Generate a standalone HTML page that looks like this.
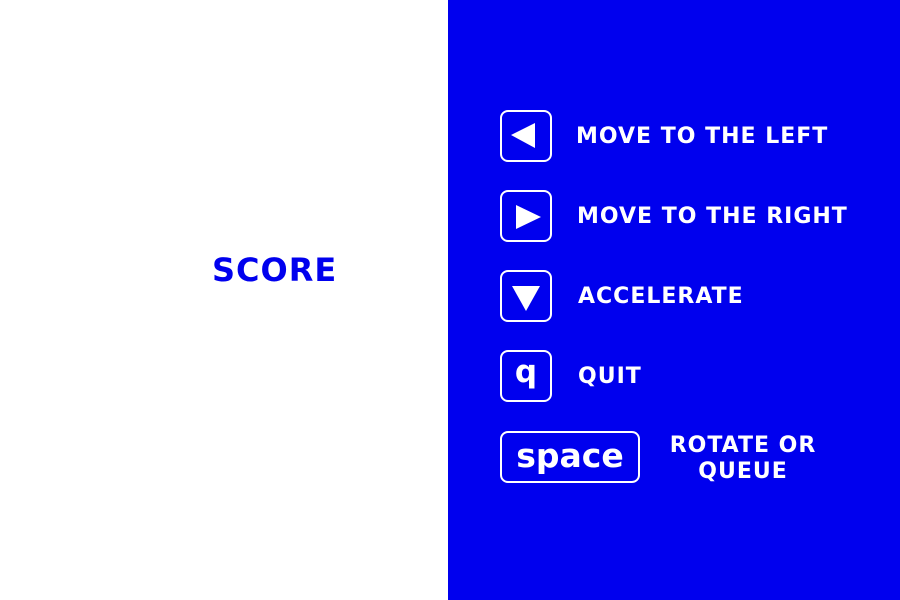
<!DOCTYPE html>
<html><head><style>
body{margin:0;width:900px;height:600px;position:relative;background:#fff;font-family:"DejaVu Sans","Liberation Sans",sans-serif;font-weight:bold;overflow:hidden}
.p{position:absolute;left:448px;top:0;width:452px;height:600px;background:#0000ee}
.b{position:absolute;border:2px solid #fff;border-radius:8px;box-sizing:border-box;color:#fff;text-align:center}
.t{position:absolute;color:#fff;font-size:22px;letter-spacing:1px;white-space:nowrap;line-height:26px}
svg{position:absolute;left:0;top:0}
</style></head><body>
<div style="position:absolute;left:212px;top:251px;font-size:32px;letter-spacing:1px;color:#0000ee;line-height:38px">SCORE</div>
<div class="p"></div>
<div class="b" style="left:500px;top:110px;width:52px;height:52px"></div>
<div class="b" style="left:500px;top:190px;width:52px;height:52px"></div>
<div class="b" style="left:500px;top:270px;width:52px;height:52px"></div>
<div class="b" style="left:500px;top:350px;width:52px;height:52px;font-size:31px;line-height:40px">q</div>
<div class="b" style="left:500px;top:431px;width:140px;height:52px;font-size:33px;line-height:45px">space</div>
<svg width="900" height="600"><g fill="#fff">
<polygon points="511,135 535,123 535,148"/>
<polygon points="516,205 516,229 541,217"/>
<polygon points="512,286 540,286 526,311"/>
</g></svg>
<div class="t" style="left:576px;top:124px">MOVE TO THE LEFT</div>
<div class="t" style="left:577px;top:204px">MOVE TO THE RIGHT</div>
<div class="t" style="left:578px;top:284px">ACCELERATE</div>
<div class="t" style="left:578px;top:364px">QUIT</div>
<div class="t" style="left:663px;top:433px;text-align:center;width:160px">ROTATE OR<br>QUEUE</div>
</body></html>
